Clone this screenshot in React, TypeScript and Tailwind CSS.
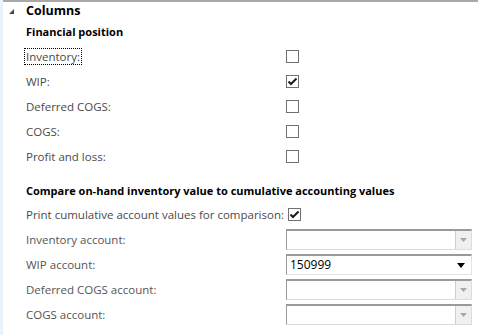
import React from 'react';

const font = { fontFamily: '"Open Sans", "Noto Sans", sans-serif' };

function CheckBox({ checked }: { checked?: boolean }) {
  return (
    <div className="w-[13px] h-[13px] border border-[#707070] bg-white flex items-center justify-center">
      {checked && (
        <svg width="11" height="11" viewBox="0 0 11 11">
          <path d="M1.5 5.5 L4 8 L9.5 2.5" fill="none" stroke="#1a1a1a" strokeWidth="2" />
        </svg>
      )}
    </div>
  );
}

function Combo({ value, disabled }: { value?: string; disabled?: boolean }) {
  return (
    <div
      className={`w-[186px] h-[21px] flex items-stretch border-t-2 border-l border-[#9a9a9a] border-r border-b bg-white ${
        disabled ? 'border-r-[#dcdcdc] border-b-[#dcdcdc]' : 'border-r-[#e3e3e3] border-b-[#e3e3e3]'
      }`}
    >
      <div className="flex-1 pl-[3px] text-[12px] text-black leading-[18px]">{value}</div>
      {disabled ? (
        <div className="w-[16px] bg-[#f0f0f0] border-l border-[#cfcfcf] flex items-center justify-center">
          <svg width="7" height="4" viewBox="0 0 7 4">
            <path d="M0 0 H7 L3.5 4 Z" fill="#a8a8a8" />
          </svg>
        </div>
      ) : (
        <div className="w-[20px] flex items-center justify-center">
          <svg width="8" height="5" viewBox="0 0 8 5">
            <path d="M0 0 H8 L4 5 Z" fill="#000" />
          </svg>
        </div>
      )}
    </div>
  );
}

export default function App() {
  const financial = [
    { label: 'Inventory:', checked: false, focus: true },
    { label: 'WIP:', checked: true },
    { label: 'Deferred COGS:', checked: false },
    { label: 'COGS:', checked: false },
    { label: 'Profit and loss:', checked: false },
  ];

  const accounts = [
    { label: 'Inventory account:', disabled: true },
    { label: 'WIP account:', value: '150999' },
    { label: 'Deferred COGS account:', disabled: true },
    { label: 'COGS account:', disabled: true },
  ];

  return (
    <div className="w-[478px] h-[335px] flex bg-white overflow-hidden" style={font}>
      <div className="w-[3px] bg-[#eaf2fb] shrink-0" />
      <div className="flex-1 border-t-2 border-[#a9a9a9] text-[11.5px] text-[#4a4a4a]">
        {/* Columns header */}
        <div className="h-[18px] flex items-center">
          <div className="w-[23px] pl-[6px]">
            <svg width="5" height="5" viewBox="0 0 5 5">
              <path d="M5 0 V5 H0 Z" fill="#444" />
            </svg>
          </div>
          <span className="text-[12.5px] font-bold text-black">Columns</span>
        </div>

        <div className="pl-[23px]">
          <div className="h-[24px] flex items-center text-[11px] font-bold text-black">Financial position</div>

          {financial.map((row) => (
            <div key={row.label} className="h-[25px] flex items-center">
              <div className="w-[260px]">
                <span
                  className={
                    row.focus ? 'outline-1 outline-dotted outline-black px-[1px] -ml-[1px]' : ''
                  }
                >
                  {row.label}
                </span>
              </div>
              <CheckBox checked={row.checked} />
            </div>
          ))}

          <div className="h-[22px] mt-[11px] flex items-center text-[11px] font-bold text-black">
            Compare on-hand inventory value to cumulative accounting values
          </div>

          <div className="h-[25px] flex items-center gap-[4px]">
            <span>Print cumulative account values for comparison:</span>
            <CheckBox checked />
          </div>

          {accounts.map((row) => (
            <div key={row.label} className="h-[25px] flex items-center">
              <div className="w-[260px] text-[#555]">{row.label}</div>
              <Combo value={row.value} disabled={row.disabled} />
            </div>
          ))}
        </div>
      </div>
    </div>
  );
}
